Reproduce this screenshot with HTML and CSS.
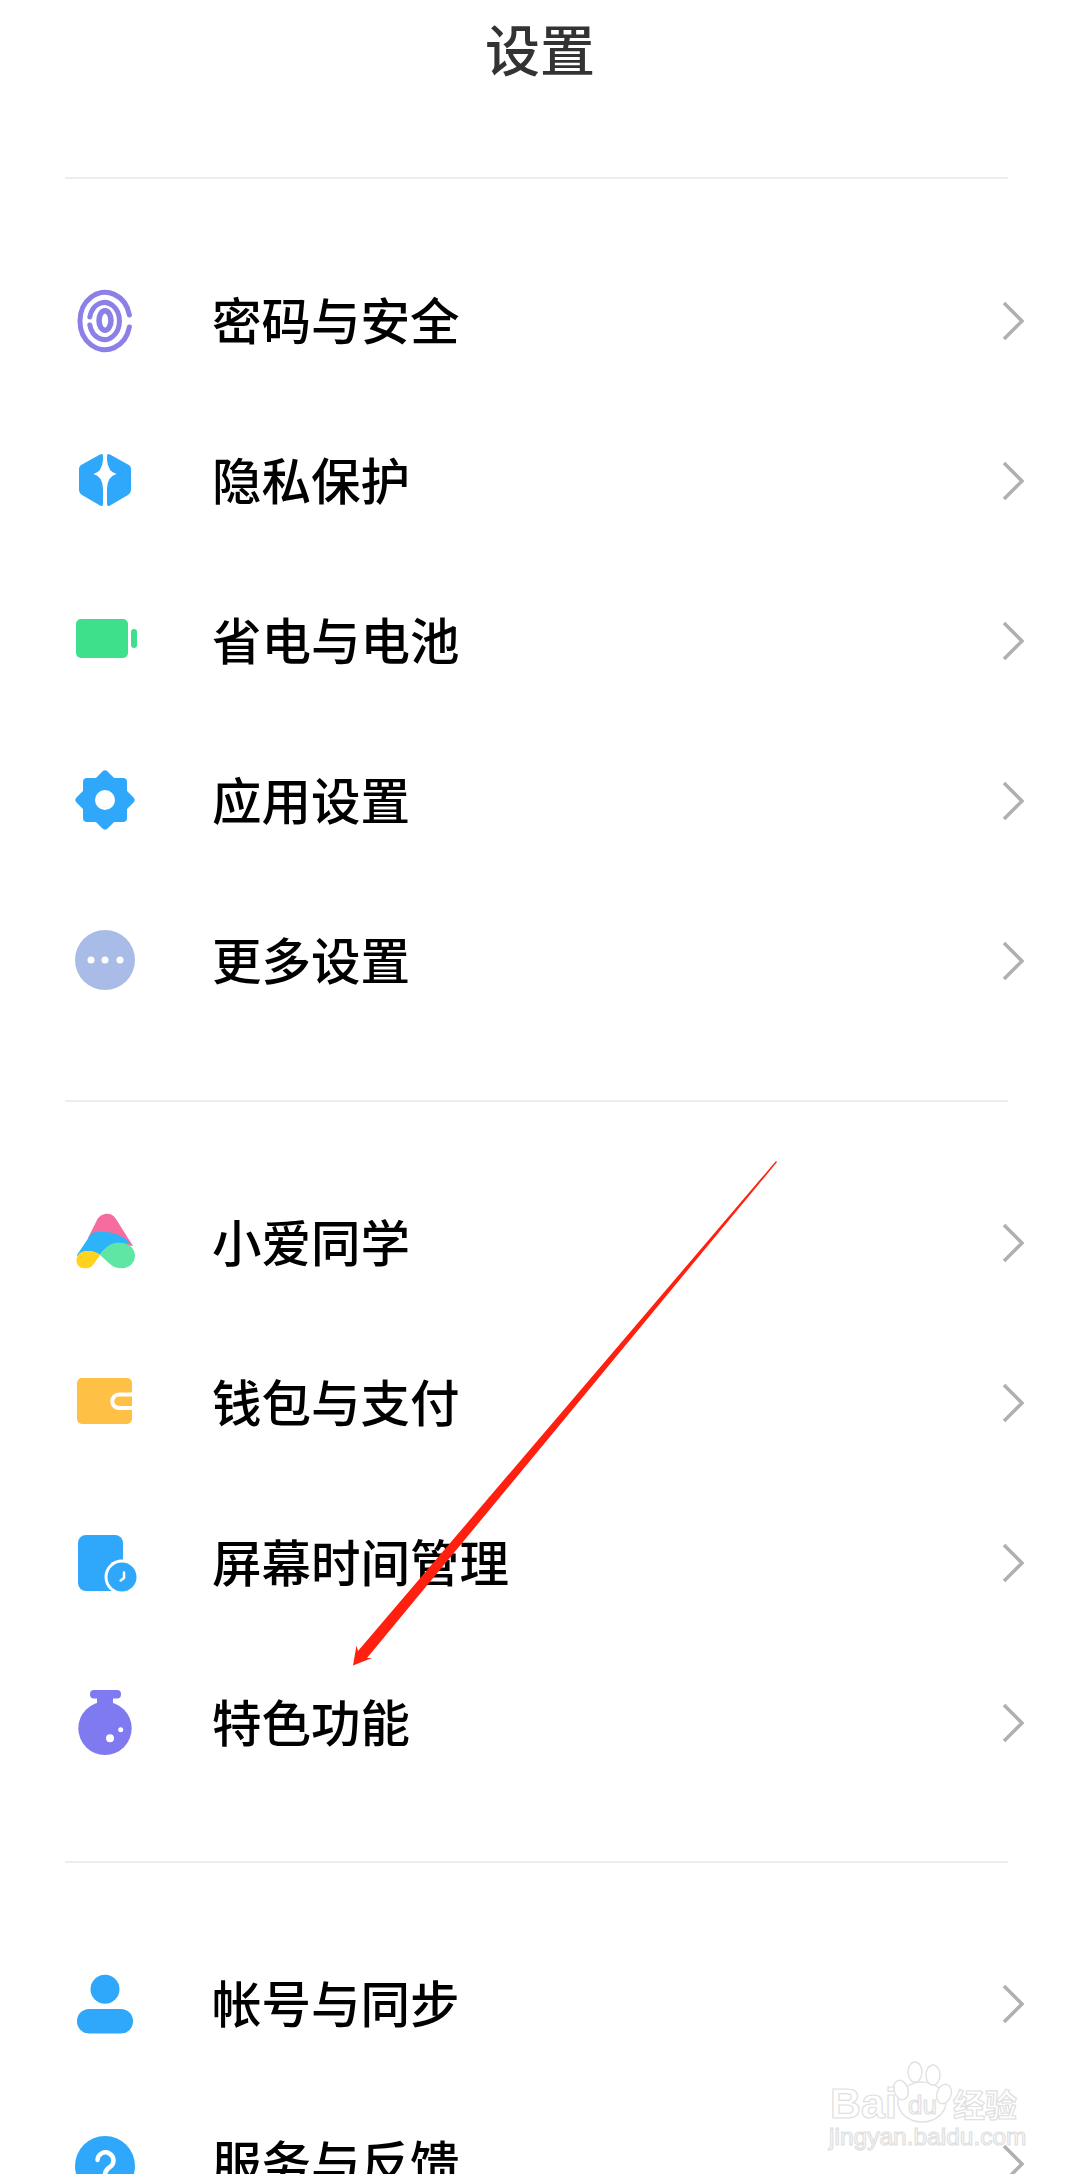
FILE: index.html
```html
<!DOCTYPE html>
<html lang="zh-CN">
<head>
    <meta charset="UTF-8">
    <meta name="viewport" content="width=device-width, initial-scale=1.0">
    <title>设置</title>
    <link rel="stylesheet" href="styles.css">
</head>
<body>
    <div class="screen">
        <header class="page-header">
            <h1>设置</h1>
        </header>

        <div class="divider"></div>

        <ul class="group group-first">
            <li class="row">
                <svg class="icon" viewBox="0 0 70 70">
                    <g fill="none" stroke="#8a80e8" stroke-linecap="round">
                        <path stroke-width="5" d="M59.4 29 A25 28.7 0 1 0 59.4 41"/>
                        <path stroke-width="5" d="M19.8 31 A15 18.5 0 1 1 19.8 39"/>
                        <ellipse stroke-width="5.5" cx="35" cy="34.5" rx="6" ry="9.7"/>
                    </g>
                </svg>
                <span class="label">密码与安全</span>
                <svg class="chevron" viewBox="0 0 22 40"><path d="M2 2 L20 20 L2 38"/></svg>
            </li>
            <li class="row">
                <svg class="icon" viewBox="0 0 70 70">
                    <g fill="#2fa8fb">
                        <path d="M30 8.5 Q33 7 33 10 L33 14 Q32 26 23.5 28 Q32 30 33 42 L33 58 Q33 61 30 59.5 L12 49 Q9 47 9 44 L9 23 Q9 20 12 18.5 Z"/>
                        <path transform="matrix(-1 0 0 1 70 0)" d="M30 8.5 Q33 7 33 10 L33 14 Q32 26 23.5 28 Q32 30 33 42 L33 58 Q33 61 30 59.5 L12 49 Q9 47 9 44 L9 23 Q9 20 12 18.5 Z"/>
                    </g>
                </svg>
                <span class="label">隐私保护</span>
                <svg class="chevron" viewBox="0 0 22 40"><path d="M2 2 L20 20 L2 38"/></svg>
            </li>
            <li class="row">
                <svg class="icon" viewBox="0 0 70 70">
                    <rect x="6" y="13" width="52" height="39" rx="5" fill="#3fe08c"/>
                    <rect x="61" y="23" width="6" height="19" rx="3" fill="#3fe08c"/>
                </svg>
                <span class="label">省电与电池</span>
                <svg class="chevron" viewBox="0 0 22 40"><path d="M2 2 L20 20 L2 38"/></svg>
            </li>
            <li class="row">
                <svg class="icon" viewBox="0 0 70 70">
                    <g fill="#2fa8fb">
                        <rect x="13" y="12" width="44" height="44" rx="4"/>
                        <rect x="13" y="12" width="44" height="44" rx="4" transform="rotate(45 35 34)"/>
                    </g>
                    <circle cx="35" cy="34" r="10" fill="#fff"/>
                </svg>
                <span class="label">应用设置</span>
                <svg class="chevron" viewBox="0 0 22 40"><path d="M2 2 L20 20 L2 38"/></svg>
            </li>
            <li class="row">
                <svg class="icon" viewBox="0 0 70 70">
                    <circle cx="35" cy="34" r="30" fill="#a9bce8"/>
                    <g fill="#fff">
                        <circle cx="21" cy="34" r="3.5"/>
                        <circle cx="35" cy="34" r="3.5"/>
                        <circle cx="50" cy="34" r="3.5"/>
                    </g>
                </svg>
                <span class="label">更多设置</span>
                <svg class="chevron" viewBox="0 0 22 40"><path d="M2 2 L20 20 L2 38"/></svg>
            </li>
        </ul>

        <div class="divider"></div>

        <ul class="group group-second">
            <li class="row">
                <svg class="icon" viewBox="0 0 70 70">
                    <path fill="#f76c9f" d="M27 12 C31 4 42 3.5 46 11 L63 38 L40 36 L18 30 Z"/>
                    <path fill="#2db4f8" d="M7 47 L21.7 25 C32 22 50 24 60 34.7 L46 36 C38 38 33 42 30 47 C26 44 22 43 18 43 C13 43 9 45 7 49 Z"/>
                    <path fill="#ffd21f" d="M6.5 52 C7 46 12 43 18 43 C23 43 27 44.5 30 47 L23 57 C20 60 17 60.5 14 60.3 C9 60 6 56 6.5 52 Z"/>
                    <path fill="#5fe6a4" d="M30 47 C34 40 40 35 48 34.7 C58 34 65 40 65 47.5 C65 55 59 60.3 52 60.3 C47 60.3 43 59 40 56 Z"/>
                </svg>
                <span class="label">小爱同学</span>
                <svg class="chevron" viewBox="0 0 22 40"><path d="M2 2 L20 20 L2 38"/></svg>
            </li>
            <li class="row">
                <svg class="icon" viewBox="0 0 70 70">
                    <rect x="7" y="10" width="55" height="46" rx="5" fill="#ffc145"/>
                    <path fill="none" stroke="#fff" stroke-width="4" d="M62 26.5 H49 A6.75 6.75 0 0 0 49 40 H62"/>
                </svg>
                <span class="label">钱包与支付</span>
                <svg class="chevron" viewBox="0 0 22 40"><path d="M2 2 L20 20 L2 38"/></svg>
            </li>
            <li class="row">
                <svg class="icon" viewBox="0 0 70 70">
                    <rect x="8" y="7" width="45" height="56" rx="8" fill="#2fa8fb"/>
                    <circle cx="52" cy="49" r="17.5" fill="#fff"/>
                    <circle cx="52" cy="49" r="14.5" fill="#2fa8fb"/>
                    <path fill="none" stroke="#fff" stroke-width="2.5" stroke-linecap="round" stroke-linejoin="round" d="M54 44.5 V50 L50.7 52.5"/>
                </svg>
                <span class="label">屏幕时间管理</span>
                <svg class="chevron" viewBox="0 0 22 40"><path d="M2 2 L20 20 L2 38"/></svg>
            </li>
            <li class="row">
                <svg class="icon" viewBox="0 0 70 70">
                    <g fill="#7f7af0">
                        <rect x="20" y="2" width="31" height="8.5" rx="4"/>
                        <rect x="27" y="9" width="16" height="12"/>
                        <circle cx="35" cy="40.3" r="26.7"/>
                    </g>
                    <circle cx="40" cy="50.3" r="4" fill="#fff"/>
                    <circle cx="50.7" cy="41.7" r="2.5" fill="#fff"/>
                </svg>
                <span class="label">特色功能</span>
                <svg class="chevron" viewBox="0 0 22 40"><path d="M2 2 L20 20 L2 38"/></svg>
            </li>
        </ul>

        <div class="divider"></div>

        <ul class="group group-third">
            <li class="row">
                <svg class="icon" viewBox="0 0 70 70">
                    <circle cx="35" cy="20.3" r="14.5" fill="#2fa8fb"/>
                    <rect x="7" y="40" width="56" height="24.5" rx="12" fill="#2fa8fb"/>
                </svg>
                <span class="label">帐号与同步</span>
                <svg class="chevron" viewBox="0 0 22 40"><path d="M2 2 L20 20 L2 38"/></svg>
            </li>
            <li class="row">
                <svg class="icon" viewBox="0 0 70 70">
                    <circle cx="35" cy="37" r="30" fill="#2fa8fb"/>
                    <path fill="none" stroke="#fff" stroke-width="4.5" stroke-linecap="round" d="M27.5 31 A8 8 0 1 1 40 38 Q35 41 35 46"/>
                    <circle cx="35" cy="54" r="3" fill="#fff"/>
                </svg>
                <span class="label">服务与反馈</span>
                <svg class="chevron" viewBox="0 0 22 40"><path d="M2 2 L20 20 L2 38"/></svg>
            </li>
        </ul>

        <!-- red annotation arrow drawn over the list -->
        <svg class="arrow" viewBox="0 0 1080 2174">
            <path d="M776 1161 L777 1162 L367 1658 L372 1658 L353 1665.5 L356.5 1645.5 L358 1651 Z"/>
        </svg>

        <!-- site watermark, bottom right -->
        <svg class="watermark" viewBox="0 0 205 115">
            <g class="paw">
                <ellipse cx="97" cy="62" rx="24" ry="20"/>
                <ellipse cx="76" cy="50" rx="7" ry="10" transform="rotate(-20 76 50)"/>
                <ellipse cx="90" cy="32" rx="7" ry="10"/>
                <ellipse cx="108" cy="35" rx="7" ry="10"/>
                <ellipse cx="119" cy="54" rx="7" ry="10" transform="rotate(20 119 54)"/>
            </g>
            <text class="wm-bai" x="5" y="78">Bai</text>
            <text class="wm-du" x="83" y="74">du</text>
            <text class="wm-cn" x="128" y="77">经验</text>
            <text class="wm-url" x="4" y="105">jingyan.baidu.com</text>
        </svg>
    </div>
</body>
</html>
```

FILE: styles.css
```css
body {
    margin: 0;
    padding: 0;
    background-color: #fff;
    font-family: "Noto Sans CJK SC", "Noto Sans", sans-serif;
}

.screen {
    position: relative;
    width: 1080px;
    height: 2174px;
    overflow: hidden;
}

.page-header {
    height: 177px;
}

.page-header h1 {
    margin: 0;
    height: 94px;
    line-height: 94px;
    font-size: 55px;
    font-weight: 500;
    color: #333;
    text-align: center;
}

.divider {
    height: 2px;
    margin: 0 72px 0 65px;
    background-color: #ededed;
}

.group {
    list-style: none;
    margin: 0;
    padding: 0;
}

.group-first {
    padding-top: 62px;
    padding-bottom: 59px;
}

.group-second {
    padding-top: 61px;
    padding-bottom: 58px;
}

.group-third {
    padding-top: 61px;
}

.row {
    display: flex;
    align-items: center;
    height: 160px;
    padding: 0 56px 0 70px;
}

.icon {
    flex: none;
    width: 70px;
    height: 70px;
}

.label {
    flex: 1;
    margin-left: 72px;
    padding-bottom: 6px;
    font-size: 49.5px;
    font-weight: 500;
    color: #000;
}

.chevron {
    flex: none;
    width: 22px;
    height: 40px;
}

.chevron path {
    fill: none;
    stroke: #b0b0b0;
    stroke-width: 3.5;
}

.arrow {
    position: absolute;
    left: 0;
    top: 0;
    width: 1080px;
    height: 2174px;
}

.arrow path {
    fill: #ff2010;
}

.watermark {
    position: absolute;
    left: 825px;
    top: 2040px;
    width: 205px;
    height: 115px;
}

.paw ellipse {
    fill: #fff;
    stroke: #e2e2e2;
    stroke-width: 1.5;
}

.watermark text {
    fill: #fff;
    stroke: #e0e0e0;
    stroke-width: 1.2;
    font-family: "Liberation Sans", sans-serif;
}

.wm-bai {
    font-size: 43px;
    font-weight: bold;
}

.wm-du {
    font-size: 26px;
}

.watermark .wm-cn {
    font-size: 32px;
    font-weight: bold;
    font-family: "Noto Sans CJK SC", sans-serif;
}

.wm-url {
    font-size: 24.5px;
}
```
